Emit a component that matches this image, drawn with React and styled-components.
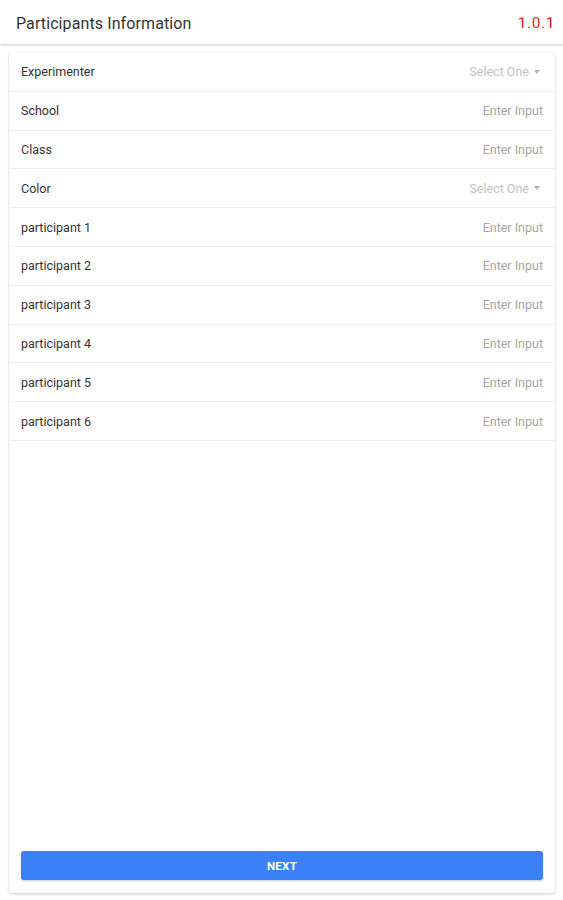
import React from "react";
import styled, { createGlobalStyle } from "styled-components";

const Global = createGlobalStyle`
  html, body { margin: 0; padding: 0; background: #ffffff; }
  body { font-family: Roboto, "Noto Sans", "Liberation Sans", sans-serif; }
  * { box-sizing: border-box; }
`;

const Page = styled.div`
  width: 563px;
  height: 900px;
  display: flex;
  flex-direction: column;
  background: #fff;
`;

const Header = styled.header`
  height: 44px;
  flex: 0 0 44px;
  display: flex;
  align-items: center;
  justify-content: space-between;
  padding: 2px 8px 0 16px;
  box-shadow: 0 1px 3px rgba(0, 0, 0, 0.22);
  position: relative;
  z-index: 1;
`;

const Title = styled.h1`
  margin: 0;
  font-size: 16px;
  font-weight: 400;
  color: #333;
  letter-spacing: 0.1px;
`;

const Version = styled.span`
  font-size: 15.5px;
  color: #e8231f;
  letter-spacing: 0.6px;
`;

const Body = styled.main`
  flex: 1;
  display: flex;
  padding: 9px 8px 7px 9px;
`;

const Card = styled.section`
  flex: 1;
  display: flex;
  flex-direction: column;
  background: #fff;
  border-radius: 3px;
  box-shadow: 0 1px 3px rgba(0, 0, 0, 0.2), 0 0 1px rgba(0, 0, 0, 0.08);
`;

const Row = styled.div`
  height: 38.8px;
  display: flex;
  align-items: center;
  justify-content: space-between;
  padding: 0 12px;
  border-bottom: 1px solid #eeeeee;
`;

const Label = styled.span`
  font-size: 12.5px;
  color: #333;
`;

const Placeholder = styled.span`
  font-size: 12.5px;
  color: ${(p) => (p.$select ? "#c2c2c2" : "#a6a6a6")};
  display: flex;
  align-items: center;
  gap: 3px;
  margin-right: ${(p) => (p.$select ? "3px" : "0")};
`;

const Caret = styled.span`
  width: 0;
  height: 0;
  border-left: 3.5px solid transparent;
  border-right: 3.5px solid transparent;
  border-top: 4px solid #b0b0b0;
  margin-left: 2px;
`;

const Spacer = styled.div`
  flex: 1;
`;

const NextButton = styled.button`
  margin: 0 12px 13px 12px;
  height: 29px;
  border: none;
  border-radius: 3px;
  background: #3a81f8;
  color: #fff;
  font-family: Roboto, "Noto Sans", sans-serif;
  font-size: 11.5px;
  font-weight: 700;
  letter-spacing: 0.3px;
  box-shadow: 0 1px 2px rgba(0, 0, 0, 0.2);
`;

const fields = [
  { label: "Experimenter", select: true },
  { label: "School" },
  { label: "Class" },
  { label: "Color", select: true },
  { label: "participant 1" },
  { label: "participant 2" },
  { label: "participant 3" },
  { label: "participant 4" },
  { label: "participant 5" },
  { label: "participant 6" },
];

export default function App() {
  return (
    <Page>
      <Global />
      <Header>
        <Title>Participants Information</Title>
        <Version>1.0.1</Version>
      </Header>
      <Body>
        <Card>
          {fields.map((f) => (
            <Row key={f.label}>
              <Label>{f.label}</Label>
              {f.select ? (
                <Placeholder $select>
                  Select One
                  <Caret />
                </Placeholder>
              ) : (
                <Placeholder>Enter Input</Placeholder>
              )}
            </Row>
          ))}
          <Spacer />
          <NextButton>NEXT</NextButton>
        </Card>
      </Body>
    </Page>
  );
}
